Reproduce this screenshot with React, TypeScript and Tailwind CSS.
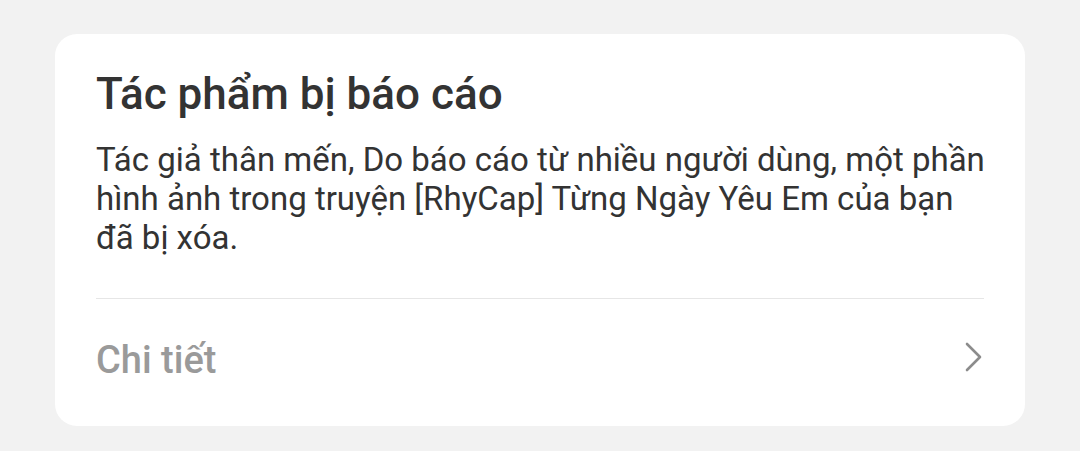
import React from 'react';

const ChevronRight: React.FC = () => (
  <svg width="20" height="32" viewBox="0 0 20 32" fill="none" className="shrink-0 mb-[6px]">
    <polyline
      points="3,3 16,16 3,29"
      stroke="#8c8c8c"
      strokeWidth="2.6"
      strokeLinecap="round"
      strokeLinejoin="round"
    />
  </svg>
);

const bodyLines = [
  'Tác giả thân mến, Do báo cáo từ nhiều người dùng, một phần',
  'hình ảnh trong truyện [RhyCap] Từng Ngày Yêu Em của bạn',
  'đã bị xóa.',
];

export default function App() {
  return (
    <div
      className="w-full h-[451px] bg-[#f2f2f2] px-[55px] pt-[34px]"
      style={{ fontFamily: 'Roboto, "Noto Sans", sans-serif' }}
    >
      <div className="bg-white rounded-[22px] px-[41px] pt-[34px]">
        <h1 className="text-[44px] leading-[52px] font-medium text-[#333333]">Tác phẩm bị báo cáo</h1>
        <p className="mt-[20px] text-[33px] leading-[39px] text-[#333333]">
          {bodyLines.map((line) => (
            <span key={line} className="block whitespace-nowrap">{line}</span>
          ))}
        </p>
        <div className="mt-[41px] h-px bg-[#e6e6e6]" />
        <div className="h-[127px] pb-[5px] flex items-center justify-between">
          <span className="text-[38px] leading-none font-medium text-[#9a9a9a]">Chi tiết</span>
          <ChevronRight />
        </div>
      </div>
    </div>
  );
}
